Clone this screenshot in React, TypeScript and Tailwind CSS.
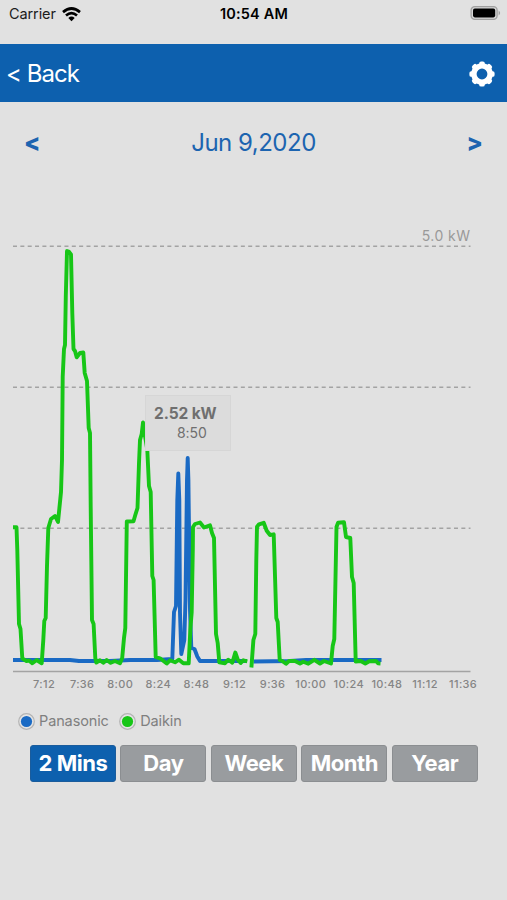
import React, { useState } from "react";

type Point = [number, number];

interface Series {
  name: string;
  color: string;
  lines: Point[][];
}

const CHART_TOP = 220;

const series: Series[] = [
  {
    name: "Panasonic",
    color: "#1a6ac4",
    lines: [
      [
        [13, 660], [70, 660], [79, 661], [110, 661], [130, 660], [157, 660], [172.3, 659],
        [174, 612], [176, 606], [177.3, 500], [178.3, 473.5], [179.3, 500], [180, 613],
        [181.3, 654], [184.3, 640], [185.5, 600], [187, 480], [187.7, 458], [188.4, 480],
        [190, 610], [191.3, 648], [194.5, 649], [197.3, 656.5], [200, 661], [247, 661],
      ],
      [[253.5, 661.5], [290, 661], [306, 660], [381.5, 660]],
    ],
  },
  {
    name: "Daikin",
    color: "#17c617",
    lines: [
      [
        [13, 527.3], [16.5, 527.3], [17.3, 550], [19, 624], [20.5, 629], [22.3, 658.5],
        [26.5, 661], [29, 660.5], [32.3, 663.3], [36.7, 660], [41.7, 663.3], [43.3, 640],
        [44.3, 621], [45.7, 618], [47, 566], [48.3, 528], [51, 519], [55, 516], [58, 522],
        [61, 492], [62, 460], [62.7, 377], [64, 349], [65, 345], [65.8, 296], [67, 251],
        [68.7, 251.5], [71, 254.5], [72.3, 313], [73.5, 349], [75, 351], [76.7, 357.3],
        [80, 353], [83.3, 352.5], [84.7, 373], [87, 381], [88.7, 428], [90, 433],
        [90.7, 507], [92, 620], [93.6, 624], [95.3, 658], [96.3, 662.5], [100, 660.3],
        [103.3, 662.8], [106.7, 660], [110.7, 662.8], [115, 661], [120, 663.2],
        [122.2, 658], [124, 638], [125.3, 628], [126.4, 550], [126.8, 521.5],
        [133.5, 521.2], [135.3, 515], [137.5, 508], [139, 463], [140, 440], [141.7, 434],
        [143, 422.5], [144.2, 431], [147.3, 450], [149, 486], [150.7, 492], [151.8, 550],
        [152.3, 576], [153.6, 580], [155.7, 657], [160, 658.3], [166.7, 663.5],
        [170, 660.3], [175, 662.3], [179, 659.7], [183.3, 663.2], [188.7, 663.3],
        [190.3, 630], [191.7, 612], [192.8, 550], [193, 527], [195, 524], [200, 522.5],
        [204, 527.5], [210, 525.3], [212, 533], [214, 538], [216, 634], [217.7, 643],
        [219.3, 662.3], [225, 663.2], [228.3, 659.7], [232.3, 662.7], [235.3, 652.5],
        [237.7, 659.5], [240.7, 663], [243.3, 660.3], [247.3, 661.3],
      ],
      [
        [251.4, 667.5], [253.4, 640], [255.3, 634], [256.3, 560], [257, 526.7], [259, 524.3],
        [263.7, 522.8], [266.7, 530.7], [270, 535], [273.7, 534.3], [275, 576], [276.3, 618],
        [277.7, 622], [279.7, 660], [282.3, 661], [286, 663.8], [289, 661], [295, 661],
        [300, 663.5], [303.3, 661.7], [308.3, 663.7], [314.3, 659.8], [320, 663.5],
        [324, 661], [331, 663.5], [332.7, 646], [334.3, 639], [336.5, 527], [338, 522.8],
        [344, 522.2], [346, 537], [350.3, 538], [352, 577], [353.7, 583], [355.7, 661.5],
        [360.7, 661], [365.3, 663.5], [369.3, 661.3], [376, 661], [378, 663.3], [380.5, 663.5],
      ],
    ],
  },
];

const gridLines = [246.3, 387.3, 528.3];

const ticks = [
  "7:12", "7:36", "8:00", "8:24", "8:48", "9:12",
  "9:36", "10:00", "10:24", "10:48", "11:12", "11:36",
];

const periods = ["2 Mins", "Day", "Week", "Month", "Year"];

const toPoints = (points: Point[]) =>
  points.map(([x, y]) => `${x},${y - CHART_TOP}`).join(" ");

// Outline of the cog: eight rounded teeth around a ring
const GearIcon: React.FC = () => (
  <svg width="26" height="26" viewBox="-13 -13 26 26">
    <circle r="8.1" fill="none" stroke="#fff" strokeWidth="5.4" />
    {[0, 45, 90, 135, 180, 225, 270, 315].map((angle) => (
      <rect
        key={angle}
        x="-2.8"
        y="-12.6"
        width="5.6"
        height="4.5"
        rx="1.9"
        fill="#fff"
        transform={`rotate(${angle})`}
      />
    ))}
  </svg>
);

const StatusBar: React.FC = () => (
  <div className="grid h-[43.5px] grid-cols-3 items-start pl-[9px] pr-[6px] pt-[4px] text-[14.5px] leading-[20px] text-[#1c1c1c]">
    <div className="flex items-center gap-[6px]">
      <span className="tracking-[-0.1px]">Carrier</span>
      <svg width="19" height="15" viewBox="0 0 19 15" fill="none" stroke="#000" strokeWidth="2.7">
        <path d="M1 5.1 Q9.5 -2.1 18 5.1" />
        <path d="M4 8.6 Q9.5 3.8 15 8.6" />
        <path d="M9.5 14.2 L6.3 11 Q9.5 8.2 12.7 11 Z" fill="#000" stroke="none" />
      </svg>
    </div>
    <span className="-ml-[2px] text-center font-semibold tracking-[0.15px] text-black">10:54 AM</span>
    <div className="flex justify-end pt-[2px]">
      <svg width="31" height="14" viewBox="0 0 31 14">
        <rect x="1.1" y="0.7" width="26" height="12.6" rx="3.6" fill="#d6d6d6" stroke="#a0a0a0" strokeWidth="1.3" />
        <rect x="3" y="2.6" width="22.2" height="8.8" rx="1.8" fill="#000" />
        <path d="M28.6 4.6 Q31.6 7 28.6 9.4 Z" fill="#a0a0a0" />
      </svg>
    </div>
  </div>
);

const Chart: React.FC = () => (
  <div className="relative">
    <svg className="block" width="507" height="455" viewBox="0 0 507 455">
      {gridLines.map((y) => (
        <line
          key={y}
          x1="13"
          x2="470.5"
          y1={y - CHART_TOP}
          y2={y - CHART_TOP}
          stroke="#a3a3a3"
          strokeWidth="1.5"
          strokeDasharray="4 3.35"
        />
      ))}
      <line x1="13" x2="470.5" y1="451.5" y2="451.5" stroke="#a3a3a3" strokeWidth="1.5" />
      <text x="470.5" y="20.5" textAnchor="end" fontSize="14" letterSpacing="0.45" fill="#999">
        5.0 kW
      </text>
      {series.map((item) =>
        item.lines.map((line, index) => (
          <polyline
            key={`${item.name}-${index}`}
            points={toPoints(line)}
            fill="none"
            stroke={item.color}
            strokeWidth="3.9"
            strokeLinejoin="round"
          />
        ))
      )}
    </svg>

    {/* Tooltip */}
    <div className="absolute left-[144.5px] top-[175px] h-[55.5px] w-[86.5px] border border-[#d6d6d6] bg-[#dcdcdc] text-[#6f6f6f]">
      <p className="pl-[8.5px] pt-[7.5px] text-[15.5px] font-bold leading-[20px] tracking-[-0.1px]">2.52 kW</p>
      <p className="pl-[31.5px] text-[14px] leading-[18px] tracking-[-0.1px]">8:50</p>
    </div>

    {/* Time axis */}
    <div className="ml-[25px] flex pt-[2px]">
      {ticks.map((tick) => (
        <span
          key={tick}
          className="w-[38.1px] shrink-0 whitespace-nowrap text-center text-[11px] font-medium leading-[14px] tracking-[0.35px] text-[#858585]"
        >
          {tick}
        </span>
      ))}
    </div>
  </div>
);

const App: React.FC = () => {
  const [period, setPeriod] = useState("2 Mins");

  return (
    <div className="h-[900px] w-[507px] overflow-hidden bg-[#e1e1e1] font-['Inter','Liberation_Sans',sans-serif]">
      <StatusBar />

      {/* Header */}
      <div className="flex h-[58.5px] items-center justify-between bg-[#0d60ae] pl-[6px] pr-[12px] pt-[3px] text-white">
        <button className="text-[24px] leading-[30px] tracking-[-0.95px]">&lt; Back</button>
        <button>
          <GearIcon />
        </button>
      </div>

      {/* Date navigation */}
      <div className="flex h-[118px] items-start justify-between px-[24px] pt-[25px] text-[24px] leading-[30px] text-[#1c64b0]">
        <button className="pt-[1px] font-extrabold">&lt;</button>
        <span className="pt-[1px] tracking-[-0.5px]">Jun 9,2020</span>
        <button className="pt-[1px] font-extrabold">&gt;</button>
      </div>

      <Chart />

      {/* Legend */}
      <div className="flex items-center gap-[10.5px] pl-[18px] pt-[20px] text-[14.5px] leading-[20px] tracking-[-0.12px] text-[#7f7f7f]">
        {series.map((item) => (
          <div key={item.name} className="flex items-center gap-[4px]">
            <svg width="17" height="17" viewBox="0 0 17 17">
              <circle cx="8.5" cy="8.5" r="7.8" fill="#e4e4e4" stroke="#b4b4b4" strokeWidth="1.2" />
              <circle cx="8.5" cy="8.5" r="5.6" fill={item.color} />
            </svg>
            <span>{item.name}</span>
          </div>
        ))}
      </div>

      {/* Period buttons */}
      <div className="flex gap-[4.7px] pl-[30px] pt-[13.5px]">
        {periods.map((item) => (
          <button
            key={item}
            onClick={() => setPeriod(item)}
            className={`h-[37px] w-[85.8px] rounded-[3px] border text-[22px] font-bold leading-[30px] tracking-[-0.45px] text-white ${
              period === item
                ? "border-[#1a5c9c] bg-[#0d60ae]"
                : "border-[#8b8e91] bg-[#999c9f]"
            }`}
          >
            {item}
          </button>
        ))}
      </div>
    </div>
  );
};

export default App;
